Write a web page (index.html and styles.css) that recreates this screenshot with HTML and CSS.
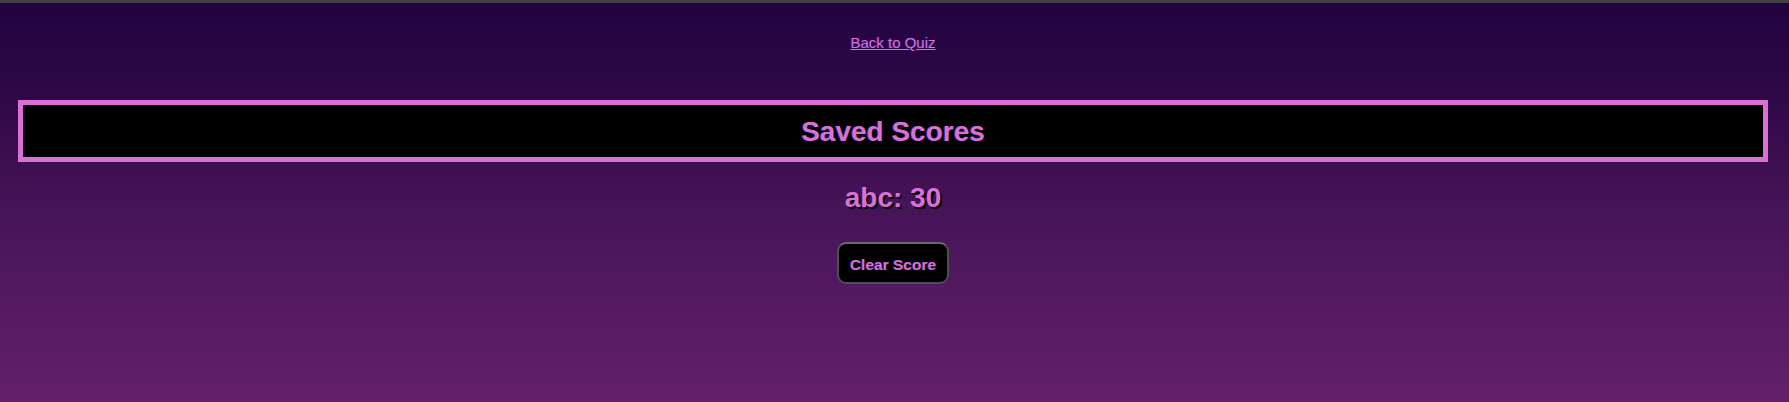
FILE: index.html
```html
<!DOCTYPE html>
<html lang="en">
<head>
<meta charset="utf-8">
<title>Saved Scores</title>
<link rel="stylesheet" href="styles.css">
</head>
<body>
<div class="topbar"></div>
<div class="page">
  <nav class="nav"><a class="back-link" href="#">Back to Quiz</a></nav>
  <header class="title-box"><h1 class="title">Saved Scores</h1></header>
  <p class="score">abc: 30</p>
  <div class="actions"><button class="clear-btn" type="button">Clear Score</button></div>
</div>
</body>
</html>
```
FILE: styles.css
```css
html, body {
  margin: 0;
  padding: 0;
  height: 100%;
}
body {
  font-family: "Liberation Sans", Arial, sans-serif;
  background: linear-gradient(to bottom, #210340 0%, #2f0947 25%, #451357 50%, #541a63 75%, #641f6c 100%);
  color: #da70d6;
  min-height: 402px;
}
.topbar {
  height: 3px;
  background: #414141;
}
.page {
  margin: 0 21px 0 18px;
  display: flex;
  flex-direction: column;
  align-items: center;
}
.nav {
  padding-top: 31px;
  height: 97px;
  box-sizing: border-box;
  line-height: 17px;
}
.back-link {
  color: #da70d6;
  font-size: 15px;
  text-decoration: underline;
  text-shadow: -1px 0 0 rgba(90, 70, 255, 0.35);
}
.title-box {
  align-self: stretch;
  background: #000;
  border: 5px solid #da70d6;
  padding: 11px 0 9px;
  text-align: center;
}
.title {
  margin: 0;
  font-size: 28px;
  line-height: 32px;
  font-weight: bold;
  color: #da70d6;
  text-shadow: -1px 0 0 rgba(90, 70, 255, 0.45);
}
.score {
  margin: 20px 0 0;
  font-size: 28px;
  line-height: 32px;
  font-weight: bold;
  color: #da70d6;
  text-shadow: 2px 2px 0 #000;
}
.actions {
  margin-top: 28px;
}
.clear-btn {
  font-family: "Liberation Sans", Arial, sans-serif;
  font-size: 15.5px;
  font-weight: bold;
  line-height: 17px;
  color: #da70d6;
  background: #000;
  border: 2px solid #4f4f4f;
  border-top-color: #6a6a6a;
  border-radius: 9px;
  padding: 12px 11px 9px;
  height: 42px;
  box-sizing: border-box;
  text-shadow: -1px 0 0 rgba(90, 70, 255, 0.45);
  cursor: pointer;
}
```
